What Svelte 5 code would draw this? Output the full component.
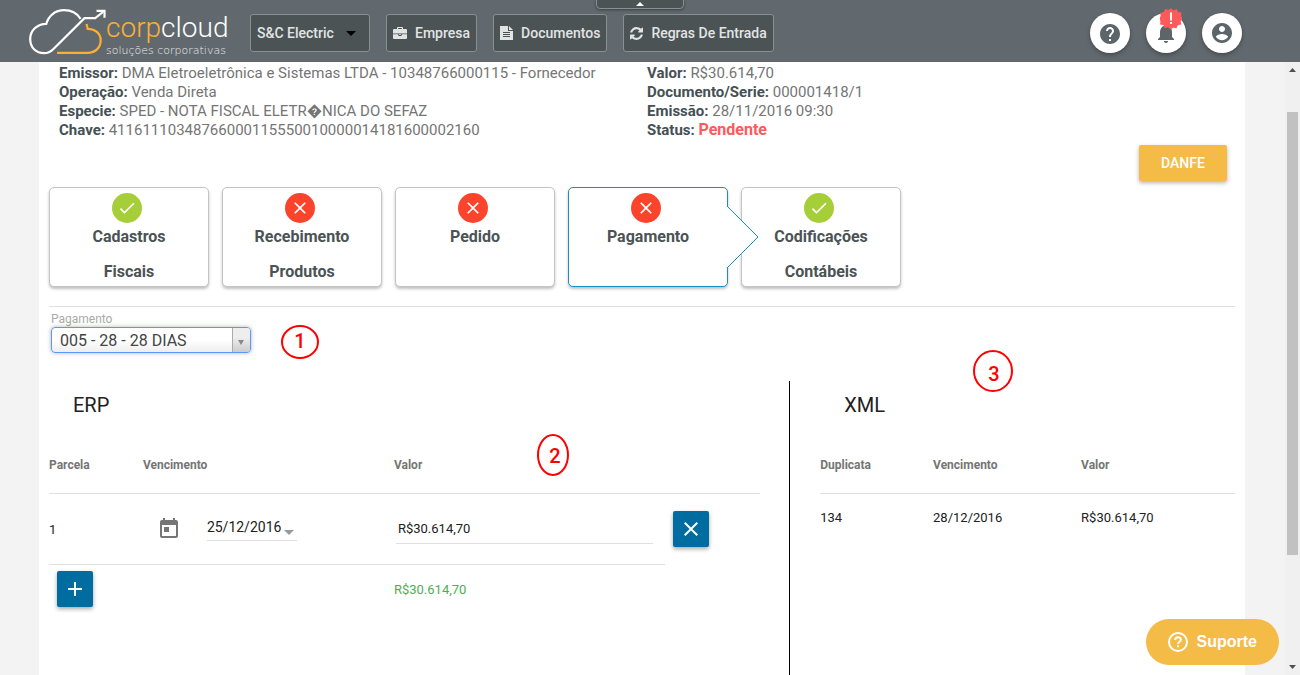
<script>
  const steps = [
    { lines: ['Cadastros', 'Fiscais'], ok: true },
    { lines: ['Recebimento', 'Produtos'], ok: false },
    { lines: ['Pedido'], ok: false },
    { lines: ['Pagamento'], ok: false, active: true },
    { lines: ['Codificações', 'Contábeis'], ok: true }
  ];

  const left = [
    ['Emissor:', 'DMA Eletroeletrônica e Sistemas LTDA - 10348766000115 - Fornecedor'],
    ['Operação:', 'Venda Direta'],
    ['Especie:', 'SPED - NOTA FISCAL ELETR\uFFFDNICA DO SEFAZ'],
    ['Chave:', '41161110348766000115550010000014181600002160']
  ];

  const right = [
    ['Valor:', 'R$30.614,70'],
    ['Documento/Serie:', '000001418/1'],
    ['Emissão:', '28/11/2016 09:30']
  ];

  let dueDate = $state('25/12/2016');
  let amount = $state('R$30.614,70');
</script>

<div class="app">
  <header>
    <a class="logo" href="#inicio">
      <svg class="cloud" width="78" height="50" viewBox="0 0 78 50" fill="none" stroke-width="2.2">
        <path d="M52.600 10.800C48.500 4.500 42.500 2.200 36 2.200 27 2.200 20.500 8 18.300 15.800 9 16 2.200 22.500 2.200 31c0 8.500 5.600 14.200 14 14.200 4 0 6.300-1.400 9-4L56.500 10.200h10.700L75 4" stroke="#fff" />
        <path d="M68.500 2.800h8v7" stroke="#fff" />
        <path d="M58.500 16l1.200 4.800c7.800 0 13 5 13 11.500 0 7.500-5.500 12.500-13 12.500H29" stroke="#fbb034" />
      </svg>
      <span class="brand">
        <span class="name"><span class="corp">corp</span>cloud</span>
        <span class="tagline">soluções corporativas</span>
      </span>
    </a>

    <nav>
      <button class="nav company">S&amp;C Electric
        <svg width="10" height="5" viewBox="0 0 10 5"><path d="M0 0h10L5 5z" fill="#000" /></svg>
      </button>
      <button class="nav">
        <svg width="14" height="14" viewBox="0 0 14 14" fill="#e2e4e4">
          <path d="M4 3V1.800Q4 1 5 1h4q1 0 1 .8V3h3q1 0 1 1v3.500H0V4q0-1 1-1zM5.200 3h3.600V2H5.200zM0 8.300h5.200V9q0 1 1 1h1.600q1 0 1-1v-.7H14V12q0 1-1 1H1q-1 0-1-1zM6 8.300h2V9H6z" />
        </svg>
        Empresa
      </button>
      <button class="nav">
        <svg width="13" height="14" viewBox="0 0 13 14" fill="#e2e4e4">
          <path fill-rule="evenodd" d="M0 0h8v5h5v9H0zM9 0l4 4H9zM3 6v1h7V6zM3 8v1h7V8zM3 10v1h7v-1z" />
        </svg>
        Documentos
      </button>
      <button class="nav">
        <svg width="13" height="13" viewBox="0 0 1536 1536" fill="#e2e4e4">
          <path d="M1511 928q0 5-1 7-64 268-268 434.500T764 1536q-146 0-282.500-55T238 1324l-129 129q-19 19-45 19t-45-19-19-45V960q0-26 19-45t45-19h448q26 0 45 19t19 45-19 45l-137 137q71 66 161 102t187 36q134 0 250-65t186-179q11-17 53-117 8-23 30-23h192q13 0 22.500 9.500t9.500 22.500zm25-800v448q0 26-19 45t-45 19h-448q-26 0-45-19t-19-45 19-45l138-138Q969 256 768 256q-134 0-250 65T332 500q-11 17-53 117-8 23-30 23H50q-13 0-22.500-9.500T18 608v-7q65-268 270-434.500T768 0q146 0 284 55.500T1297 212l130-129q19-19 45-19t45 19 19 45z" />
        </svg>
        Regras De Entrada
      </button>
    </nav>

    <button class="collapse" aria-label="Recolher menu">
      <svg width="8" height="4" viewBox="0 0 8 4"><path d="M0 4h8L4 0z" fill="#fff" /></svg>
    </button>

    <div class="actions">
      <button class="round" aria-label="Ajuda">
        <svg class="low" width="24" height="24" viewBox="0 0 24 24" fill="#5b656a">
          <path d="M12 2C6.480 2 2 6.480 2 12s4.480 10 10 10 10-4.480 10-10S17.520 2 12 2zm1 17h-2v-2h2v2zm2.070-7.750l-.9.920C13.450 12.900 13 13.500 13 15h-2v-.5c0-1.100.45-2.100 1.170-2.830l1.240-1.260c.37-.36.590-.86.590-1.410 0-1.100-.9-2-2-2s-2 .9-2 2H8c0-2.210 1.790-4 4-4s4 1.790 4 4c0 .88-.36 1.680-.93 2.250z" />
        </svg>
      </button>
      <button class="round" aria-label="Notificações">
        <svg width="24" height="24" viewBox="0 0 24 24" fill="#5b656a">
          <path d="M12 22c1.100 0 2-.9 2-2h-4c0 1.100.89 2 2 2zm6-6v-5c0-3.070-1.640-5.640-4.500-6.320V4c0-.83-.67-1.500-1.500-1.500s-1.500.67-1.500 1.500v.68C7.630 5.360 6 7.920 6 11v5l-2 2v1h16v-1l-2-2z" />
        </svg>
        <svg class="alert" width="22" height="22" viewBox="-11 -11 22 22">
          <path fill="#ff5a5a" d="M0-10.800l2.600 2.200 3.200-1.500 1.200 3.200 3.400.4-.4 3.400 2.200 2.700-2.500 2.300.5 3.500-3.400.8-1.400 3.200-3-.9-2.700 2.100-2.700-2.300-3.300 1-1.200-3.200-3.500-.6.5-3.400-2.300-2.600 2.500-2.300-.4-3.400 3.400-.8 1.500-3.100 3.200 1.200z" />
          <path fill="#fff" d="M-1-6.500h2v8h-2zM-1 3h2v2h-2z" />
        </svg>
      </button>
      <button class="round" aria-label="Conta">
        <svg width="24" height="24" viewBox="0 0 24 24" fill="#5b656a">
          <path d="M12 2C6.480 2 2 6.480 2 12s4.480 10 10 10 10-4.480 10-10S17.520 2 12 2zm0 3c1.660 0 3 1.340 3 3s-1.340 3-3 3-3-1.340-3-3 1.340-3 3-3zm0 14.200c-2.500 0-4.710-1.280-6-3.220.03-1.990 4-3.080 6-3.080 1.990 0 5.970 1.090 6 3.080-1.290 1.940-3.500 3.220-6 3.220z" />
        </svg>
      </button>
    </div>
  </header>

  <div class="body">
    <main>
      <div class="info">
        <div>
          {#each left as [name, value]}
            <p><b>{name}</b> {value}</p>
          {/each}
        </div>
        <div>
          {#each right as [name, value]}
            <p><b>{name}</b> {value}</p>
          {/each}
          <p><b>Status:</b> <strong>Pendente</strong></p>
        </div>
      </div>

      <div class="danfe-row"><button class="danfe">DANFE</button></div>

      <div class="steps">
        {#each steps as step}
          <button class="step" class:active={step.active}>
            <span class="dot" class:ok={step.ok}>
              <svg width="20" height="20" viewBox="0 0 24 24" fill="#fff">
                {#if step.ok}
                  <path d="M9 16.170L4.830 12l-1.420 1.410L9 19 21 7l-1.410-1.410z" />
                {:else}
                  <path d="M19 6.410L17.590 5 12 10.590 6.410 5 5 6.410 10.590 12 5 17.590 6.410 19 12 13.410 17.590 19 19 17.590 13.410 12z" />
                {/if}
              </svg>
            </span>
            <span class="lines">
              {#each step.lines as line}<span>{line}</span>{/each}
            </span>
            {#if step.active}
              <svg class="pointer" width="32" height="60" viewBox="0 0 32 60">
                <path d="M0 0h1l30 30L1 60H0z" fill="#fff" />
                <path d="M1 0l30 30L1 60" fill="none" stroke="#1a8cc4" />
              </svg>
            {/if}
          </button>
        {/each}
      </div>

      <div class="payment">
        <label for="pagamento">Pagamento</label>
        <div class="select">
          <select id="pagamento"><option>005 - 28 - 28 DIAS</option></select>
          <span class="arrow"></span>
        </div>
        <svg class="mark one" width="40" height="36" viewBox="0 0 40 36">
          <ellipse cx="20" cy="18" rx="18" ry="16" />
          <text x="20" y="24">1</text>
        </svg>
      </div>

      <div class="columns">
        <section class="erp">
          <h2>ERP</h2>
          <svg class="mark two" width="34" height="44" viewBox="0 0 34 44">
            <ellipse cx="17" cy="22" rx="15" ry="20" />
            <text x="19" y="30">2</text>
          </svg>
          <table>
            <thead>
              <tr><th class="c1">Parcela</th><th class="c2">Vencimento</th><th class="c3">Valor</th><th></th></tr>
            </thead>
            <tbody>
              <tr class="item">
                <td>1</td>
                <td>
                  <div class="date">
                    <button class="calendar" aria-label="Abrir calendário">
                      <svg width="24" height="24" viewBox="0 0 24 24" fill="#757575">
                        <path d="M19 3h-1V1h-2v2H8V1H6v2H5c-1.110 0-1.990.9-1.990 2L3 19c0 1.100.89 2 2 2h14c1.100 0 2-.9 2-2V5c0-1.100-.9-2-2-2zm0 16H5V8h14v11zM7 10h5v5H7z" />
                      </svg>
                    </button>
                    <div class="date-box">
                      <input aria-label="Vencimento" bind:value={dueDate} />
                      <svg width="10" height="5" viewBox="0 0 10 5"><path d="M0 0h10L5 5z" fill="#9a9a9a" /></svg>
                    </div>
                  </div>
                </td>
                <td><input class="amount" aria-label="Valor" bind:value={amount} /></td>
                <td class="tool">
                  <button class="square" aria-label="Remover">
                    <svg width="24" height="24" viewBox="0 0 24 24" fill="#fff"><path d="M19 6.410L17.590 5 12 10.590 6.410 5 5 6.410 10.590 12 5 17.590 6.410 19 12 13.410 17.590 19 19 17.590 13.410 12z" /></svg>
                  </button>
                </td>
              </tr>
              <tr class="total">
                <td class="tool">
                  <button class="square" aria-label="Adicionar">
                    <svg width="24" height="24" viewBox="0 0 24 24" fill="#fff"><path d="M19 13h-6v6h-2v-6H5v-2h6V5h2v6h6v2z" /></svg>
                  </button>
                </td>
                <td></td>
                <td>R$30.614,70</td>
                <td></td>
              </tr>
            </tbody>
          </table>
        </section>

        <section class="xml">
          <h2>XML</h2>
          <svg class="mark three" width="42" height="44" viewBox="0 0 42 44">
            <ellipse cx="21" cy="22" rx="19" ry="20" />
            <text x="22" y="32">3</text>
          </svg>
          <table>
            <thead>
              <tr><th class="x1">Duplicata</th><th class="x2">Vencimento</th><th>Valor</th></tr>
            </thead>
            <tbody>
              <tr class="plain"><td>134</td><td>28/12/2016</td><td>R$30.614,70</td></tr>
            </tbody>
          </table>
        </section>
      </div>
    </main>

    <div class="scroll">
      <svg width="7" height="4" viewBox="0 0 7 4"><path d="M0 4h7L3.500 0z" fill="#505050" /></svg>
      <div class="track"><div class="thumb"></div></div>
      <svg width="7" height="4" viewBox="0 0 7 4"><path d="M0 0h7L3.500 4z" fill="#505050" /></svg>
    </div>
  </div>

  <button class="support">
    <svg width="20" height="20" viewBox="0 0 20 20" fill="none" stroke="#fff" stroke-width="2">
      <circle cx="10" cy="10" r="9" />
      <path d="M7.200 8c0-1.700 1.200-2.700 2.800-2.700s2.800 1 2.800 2.500c0 1.900-2.800 2-2.800 4.200" />
      <path d="M10 13.300v2" />
    </svg>
    Suporte
  </button>
</div>

<style>
  :global(body) { margin: 0; }
  .app {
    display: flex;
    flex-direction: column;
    height: 100vh;
    overflow: hidden;
    position: relative;
    background: #f3f3f3;
    font-family: Roboto, sans-serif;
    font-size: 13px;
    color: #212121;
  }
  * { box-sizing: border-box; }
  svg { display: block; flex: none; }
  button {
    font: inherit;
    color: inherit;
    border: 0;
    padding: 0;
    background: none;
    cursor: pointer;
  }

  header {
    position: relative;
    flex: none;
    display: flex;
    align-items: center;
    height: 62px;
    padding: 4px 58px 0 28px;
    background: #61696e;
  }
  .logo {
    display: flex;
    width: 222px;
    color: #fff;
    text-decoration: none;
  }
  .brand {
    display: flex;
    flex-direction: column;
    padding-top: 4px;
  }
  .name {
    font-size: 28px;
    font-weight: 300;
    line-height: 32px;
  }
  .corp { color: #fbb034; }
  .tagline {
    font-family: "DejaVu Sans", sans-serif;
    font-size: 11px;
    font-weight: 200;
    line-height: 14px;
    color: #eceded;
    white-space: nowrap;
  }
  nav {
    display: flex;
    gap: 16px;
  }
  .nav {
    display: flex;
    align-items: center;
    gap: 8px;
    height: 38px;
    padding: 0 6px;
    border: 1px solid #889093;
    border-radius: 3px;
    background: #4b5355;
    color: #e2e4e4;
    font-size: 14px;
    font-weight: 500;
    white-space: nowrap;
  }
  .company {
    width: 120px;
    gap: 12px;
  }
  .collapse {
    position: absolute;
    top: -1px;
    left: 50%;
    display: flex;
    justify-content: center;
    align-items: center;
    width: 88px;
    height: 10px;
    margin-left: -54px;
    border: 1px solid #889093;
    border-radius: 0 0 4px 4px;
    background: #4b5355;
    box-shadow: 0 1px 3px rgba(0, 0, 0, 0.4);
  }
  .actions {
    display: flex;
    gap: 16px;
    margin-left: auto;
  }
  .round {
    position: relative;
    display: flex;
    align-items: center;
    justify-content: center;
    width: 40px;
    height: 40px;
    border-radius: 50%;
    background: #fff;
    box-shadow: 0 2px 4px rgba(0, 0, 0, 0.3);
  }
  .low { margin-top: 2px; }
  .alert {
    position: absolute;
    top: -5px;
    left: 14px;
  }

  .body {
    flex: 1;
    display: flex;
    min-height: 0;
  }
  main {
    flex: 1;
    display: flex;
    flex-direction: column;
    margin: 0 40px 0 39px;
    padding: 2px 10px 0;
    background: #fff;
    overflow: hidden;
  }
  .info {
    display: grid;
    grid-template-columns: 1fr 1fr;
    padding-left: 10px;
    font-size: 15px;
    line-height: 19px;
    color: #757575;
  }
  .info p {
    height: 19px;
    margin: 0;
  }
  .info b { color: #455054; }
  .info strong {
    font-size: 16px;
    line-height: 16px;
    color: #ff5a5a;
  }
  .danfe-row {
    display: flex;
    justify-content: flex-end;
    padding: 5px 8px 6px;
  }
  .danfe {
    width: 88px;
    height: 36px;
    border-radius: 2px;
    background: #f5bb47;
    color: #fff;
    font-size: 14px;
    font-weight: 500;
    box-shadow: 0 2px 4px rgba(0, 0, 0, 0.3);
  }
  .steps {
    display: flex;
    gap: 13px;
    padding-bottom: 19px;
    border-bottom: 1px solid #e0e0e0;
  }
  .step {
    position: relative;
    display: flex;
    flex-direction: column;
    align-items: center;
    width: 160px;
    height: 100px;
    padding-top: 5px;
    border: 1px solid #c4c4c4;
    border-radius: 5px;
    background: #fff;
    color: #4b5355;
    font-size: 16px;
    font-weight: 700;
    line-height: 35px;
    box-shadow: 0 2px 3px rgba(0, 0, 0, 0.25);
  }
  .lines {
    display: flex;
    flex-direction: column;
    margin-top: -4px;
    height: 67px;
  }
  .active {
    z-index: 1;
    border-color: #1a8cc4;
  }
  .pointer {
    position: absolute;
    top: 19px;
    left: 158px;
  }
  .dot {
    flex: none;
    display: flex;
    align-items: center;
    justify-content: center;
    width: 30px;
    height: 30px;
    margin-right: 4px;
    border-radius: 50%;
    background: #fc442c;
  }
  .ok { background: #a6ce39; }

  .payment {
    position: relative;
    padding: 5px 2px 28px;
  }
  .payment label {
    display: block;
    font-size: 12px;
    line-height: 15px;
    color: #aaa;
  }
  .select {
    position: relative;
    width: 200px;
  }
  select {
    display: block;
    width: 100%;
    height: 26px;
    padding: 0 24px 0 8px;
    border: 1px solid #5897fb;
    border-radius: 4px;
    background: linear-gradient(#fff 50%, #eee);
    box-shadow: 0 0 4px rgba(0, 0, 0, 0.3);
    color: #444;
    font-family: Roboto, sans-serif;
    font-size: 16px;
    appearance: none;
  }
  .arrow {
    position: absolute;
    top: 1px;
    right: 1px;
    display: flex;
    align-items: center;
    justify-content: center;
    width: 18px;
    height: 24px;
    border-left: 1px solid #aaa;
    border-radius: 0 3px 3px 0;
    background: linear-gradient(#eee 40%, #ccc);
    pointer-events: none;
  }
  .arrow::after {
    content: "";
    margin: 4px 1px 0 0;
    border: 3px solid transparent;
    border-top: 5px solid #888;
    border-bottom: 0;
  }

  .mark {
    position: absolute;
    fill: none;
    stroke: #f00;
    stroke-width: 2;
  }
  .mark text {
    fill: #f00;
    stroke: none;
    font-size: 20px;
    font-weight: 500;
    text-anchor: middle;
  }
  .one { left: 231px; top: 17px; }
  .two { left: 487px; top: 52px; }
  .three { left: 182px; top: -32px; }

  .columns {
    flex: 1;
    display: grid;
    grid-template-columns: 5fr 3fr;
  }
  section { position: relative; }
  .erp {
    padding-right: 29px;
    border-right: 1px solid #000;
  }
  .xml { padding-left: 30px; }
  h2 {
    margin: 0;
    padding: 12px 24px 20px;
    font-size: 20px;
    font-weight: 400;
    line-height: 24px;
  }
  table {
    width: 100%;
    table-layout: fixed;
    border-collapse: separate;
    border-spacing: 0;
  }
  th, td {
    padding: 0;
    text-align: left;
  }
  th {
    height: 57px;
    border-bottom: 1px solid #e0e0e0;
    font-size: 12px;
    color: #757575;
  }
  .c1 { width: 13.2%; }
  .c2 { width: 35.3%; }
  .c3 { width: 38.1%; }
  .x1 { width: 27.2%; }
  .x2 { width: 35.7%; }
  .item td {
    height: 71px;
    border-bottom: 1px solid #e0e0e0;
  }
  .item td.tool { border-bottom-color: transparent; }
  .total td {
    height: 48px;
    color: #4caf50;
  }
  .plain td { height: 46px; }
  td.tool { padding-left: 8px; }
  .date {
    display: flex;
    align-items: center;
    gap: 26px;
    padding-left: 14px;
  }
  .date-box {
    display: flex;
    align-items: center;
    width: 90px;
    height: 24px;
    padding-bottom: 4px;
    border-bottom: 1px solid #e0e0e0;
  }
  .date-box svg { margin-top: 12px; }
  input {
    min-width: 0;
    padding: 0;
    border: 0;
    outline: 0;
    background: none;
    font-family: Roboto, sans-serif;
    color: #212121;
  }
  .date-box input {
    width: 77px;
    font-size: 14px;
  }
  .amount {
    display: block;
    width: calc(100% - 14px);
    height: 30px;
    margin-left: 2px;
    padding-left: 2px;
    border-bottom: 1px solid #e0e0e0;
    font-size: 13px;
  }
  .square {
    display: flex;
    align-items: center;
    justify-content: center;
    width: 36px;
    height: 36px;
    border-radius: 2px;
    background: #006c9f;
    box-shadow: 0 2px 4px rgba(0, 0, 0, 0.35);
  }

  .scroll {
    flex: none;
    display: flex;
    flex-direction: column;
    align-items: center;
    gap: 6px;
    width: 15px;
    padding: 6px 0;
    background: #f0f0f0;
  }
  .track {
    flex: 1;
    display: flex;
    flex-direction: column;
    width: 11px;
    padding-top: 34px;
  }
  .thumb {
    height: 81%;
    background: #c1c1c1;
  }
  .support {
    position: absolute;
    right: 21px;
    bottom: 10px;
    display: flex;
    align-items: center;
    gap: 9px;
    height: 46px;
    padding: 0 22px;
    border-radius: 23px;
    background: #f5bb47;
    color: #fff;
    font-family: "Liberation Sans", Arial, sans-serif;
    font-size: 16px;
    font-weight: 700;
  }
</style>
